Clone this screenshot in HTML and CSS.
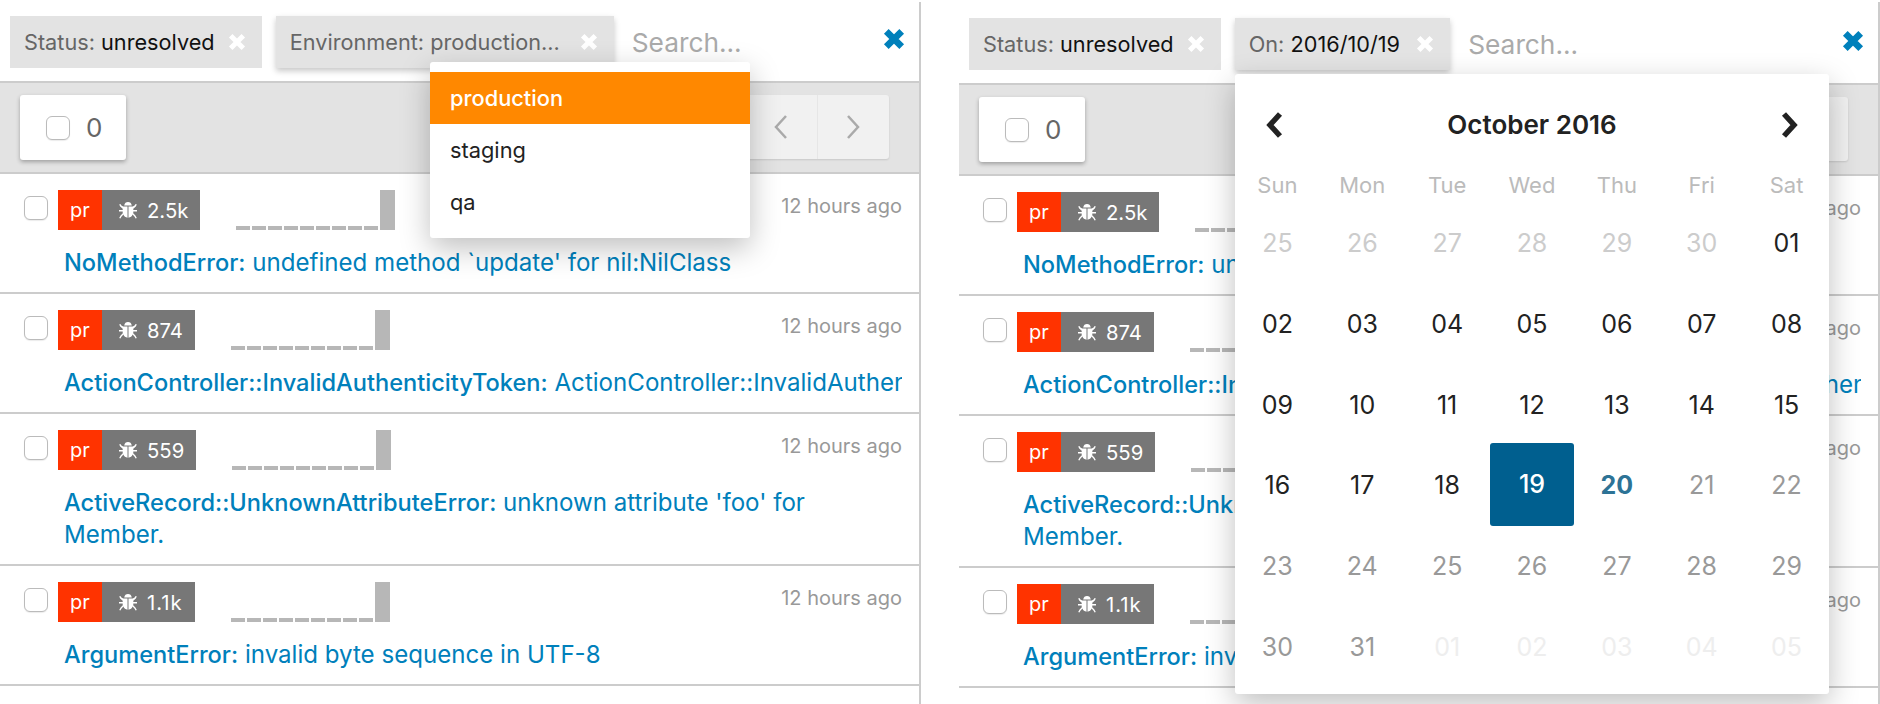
FILE: index.html
```html
<!DOCTYPE html>
<html lang="en">
<head>
  <meta charset="UTF-8" />
  <title>Issues</title>
  <link rel="stylesheet" href="styles.css">
</head>
<body>
  <svg class="defs" width="0" height="0">
    <symbol id="bug" viewBox="0 0 20 20"><path d="M6.2 5.4 C6.6 3.2 8 2 10 2 C12 2 13.4 3.2 13.8 5.4 Z M5.2 6.4 H9.5 V17.8 C7.6 17.6 6 16.4 5.4 14.6 L3.4 16.8 L2.4 18.6 L1.2 18 L2.6 15.6 L4.8 13.2 C4.7 12.6 4.7 12 4.7 11.4 H1 V10 H4.7 V8.8 L2.2 6.4 L1.2 4.6 L2.4 4 L3.4 5.6 Z M14.8 6.4 L16.6 5.6 L17.6 4 L18.8 4.6 L17.8 6.4 L15.3 8.8 V10 H19 V11.4 H15.3 C15.3 12 15.3 12.6 15.2 13.2 L17.4 15.6 L18.8 18 L17.6 18.6 L16.6 16.8 L14.6 14.6 C14 16.4 12.4 17.6 10.5 17.8 V6.4 Z"/></symbol>
    <symbol id="times" viewBox="0 0 20 20"><path d="M3 3 L17 17 M17 3 L3 17"/></symbol>
    <symbol id="chev-left" viewBox="0 0 20 28"><path d="M15 3 L5 14 L15 25"/></symbol>
    <symbol id="chev-right" viewBox="0 0 20 28"><path d="M5 3 L15 14 L5 25"/></symbol>
  </svg>

  <div class="panel panel-first">
    <div class="search-bar">
      <span class="tag"><span class="tag-key">Status:</span> unresolved <svg class="tag-x"><use href="#times"/></svg></span>
      <span class="tag tag-active"><span class="tag-key tag-env">Environment: production...</span> <svg class="tag-x"><use href="#times"/></svg></span>
      <span class="search-text">Search...</span>
      <svg class="clear-x"><use href="#times"/></svg>
    </div>
    <div class="toolbar">
      <div class="select-all"><input type="checkbox" class="check"><span>0</span></div>
      <div class="pager">
        <span class="pager-btn"><svg><use href="#chev-left"/></svg></span>
        <span class="pager-btn"><svg><use href="#chev-right"/></svg></span>
      </div>
    </div>

    <div class="row">
      <div class="row-top">
        <input type="checkbox" class="check">
        <span class="badge-env">pr</span>
        <span class="badge-count"><svg class="bug"><use href="#bug"/></svg>2.5k</span>
        <span class="spark"><i></i><i></i><i></i><i></i><i></i><i></i><i></i><i></i><i></i><i class="peak"></i></span>
        <span class="time">12 hours ago</span>
      </div>
      <div class="title"><b>NoMethodError:</b> undefined method `update' for nil:NilClass</div>
    </div>
    <div class="row">
      <div class="row-top">
        <input type="checkbox" class="check">
        <span class="badge-env">pr</span>
        <span class="badge-count"><svg class="bug"><use href="#bug"/></svg>874</span>
        <span class="spark"><i></i><i></i><i></i><i></i><i></i><i></i><i></i><i></i><i></i><i class="peak"></i></span>
        <span class="time">12 hours ago</span>
      </div>
      <div class="title title-clip"><b>ActionController::InvalidAuthenticityToken:</b> ActionController::InvalidAuthenticityToken</div>
    </div>
    <div class="row">
      <div class="row-top">
        <input type="checkbox" class="check">
        <span class="badge-env">pr</span>
        <span class="badge-count"><svg class="bug"><use href="#bug"/></svg>559</span>
        <span class="spark"><i></i><i></i><i></i><i></i><i></i><i></i><i></i><i></i><i></i><i class="peak"></i></span>
        <span class="time">12 hours ago</span>
      </div>
      <div class="title"><b>ActiveRecord::UnknownAttributeError:</b> unknown attribute 'foo' for Member.</div>
    </div>
    <div class="row">
      <div class="row-top">
        <input type="checkbox" class="check">
        <span class="badge-env">pr</span>
        <span class="badge-count badge-count-ones"><svg class="bug"><use href="#bug"/></svg>1.1k</span>
        <span class="spark"><i></i><i></i><i></i><i></i><i></i><i></i><i></i><i></i><i></i><i class="peak"></i></span>
        <span class="time">12 hours ago</span>
      </div>
      <div class="title"><b>ArgumentError:</b> invalid byte sequence in UTF-8</div>
    </div>

    <div class="dropdown">
      <div class="dropdown-item selected">production</div>
      <div class="dropdown-item">staging</div>
      <div class="dropdown-item">qa</div>
    </div>
  </div>

  <div class="panel panel-second">
    <div class="search-bar">
      <span class="tag"><span class="tag-key">Status:</span> unresolved <svg class="tag-x"><use href="#times"/></svg></span>
      <span class="tag tag-active"><span class="tag-key">On:</span> 2016/10/19 <svg class="tag-x"><use href="#times"/></svg></span>
      <span class="search-text">Search...</span>
      <svg class="clear-x"><use href="#times"/></svg>
    </div>
    <div class="toolbar">
      <div class="select-all"><input type="checkbox" class="check"><span>0</span></div>
      <div class="pager">
        <span class="pager-btn"><svg><use href="#chev-left"/></svg></span>
        <span class="pager-btn"><svg><use href="#chev-right"/></svg></span>
      </div>
    </div>

    <div class="row">
      <div class="row-top">
        <input type="checkbox" class="check">
        <span class="badge-env">pr</span>
        <span class="badge-count"><svg class="bug"><use href="#bug"/></svg>2.5k</span>
        <span class="spark"><i></i><i></i><i></i><i></i><i></i><i></i><i></i><i></i><i></i><i class="peak"></i></span>
        <span class="time">12 hours ago</span>
      </div>
      <div class="title"><b>NoMethodError:</b> undefined method `update' for nil:NilClass</div>
    </div>
    <div class="row">
      <div class="row-top">
        <input type="checkbox" class="check">
        <span class="badge-env">pr</span>
        <span class="badge-count"><svg class="bug"><use href="#bug"/></svg>874</span>
        <span class="spark"><i></i><i></i><i></i><i></i><i></i><i></i><i></i><i></i><i></i><i class="peak"></i></span>
        <span class="time">12 hours ago</span>
      </div>
      <div class="title title-clip"><b>ActionController::InvalidAuthenticityToken:</b> ActionController::InvalidAuthenticityToken</div>
    </div>
    <div class="row">
      <div class="row-top">
        <input type="checkbox" class="check">
        <span class="badge-env">pr</span>
        <span class="badge-count"><svg class="bug"><use href="#bug"/></svg>559</span>
        <span class="spark"><i></i><i></i><i></i><i></i><i></i><i></i><i></i><i></i><i></i><i class="peak"></i></span>
        <span class="time">12 hours ago</span>
      </div>
      <div class="title"><b>ActiveRecord::UnknownAttributeError:</b> unknown attribute 'foo' for Member.</div>
    </div>
    <div class="row">
      <div class="row-top">
        <input type="checkbox" class="check">
        <span class="badge-env">pr</span>
        <span class="badge-count badge-count-ones"><svg class="bug"><use href="#bug"/></svg>1.1k</span>
        <span class="spark"><i></i><i></i><i></i><i></i><i></i><i></i><i></i><i></i><i></i><i class="peak"></i></span>
        <span class="time">12 hours ago</span>
      </div>
      <div class="title"><b>ArgumentError:</b> invalid byte sequence in UTF-8</div>
    </div>

    <div class="calendar">
      <div class="cal-head">
        <svg class="cal-nav"><use href="#chev-left"/></svg>
        <span class="cal-month">October 2016</span>
        <svg class="cal-nav"><use href="#chev-right"/></svg>
      </div>
      <div class="cal-weekdays">
        <span>Sun</span><span>Mon</span><span>Tue</span><span>Wed</span><span>Thu</span><span>Fri</span><span>Sat</span>
      </div>
      <div class="cal-grid">
        <span class="day-prev">25</span><span class="day-prev">26</span><span class="day-prev">27</span><span class="day-prev">28</span><span class="day-prev">29</span><span class="day-prev">30</span><span>01</span>
        <span>02</span><span>03</span><span>04</span><span>05</span><span>06</span><span>07</span><span>08</span>
        <span>09</span><span>10</span><span>11</span><span>12</span><span>13</span><span>14</span><span>15</span>
        <span>16</span><span>17</span><span>18</span><span class="day-selected">19</span><span class="day-today">20</span><span class="day-future">21</span><span class="day-future">22</span>
        <span class="day-future">23</span><span class="day-future">24</span><span class="day-future">25</span><span class="day-future">26</span><span class="day-future">27</span><span class="day-future">28</span><span class="day-future">29</span>
        <span class="day-future">30</span><span class="day-future">31</span><span class="day-next">01</span><span class="day-next">02</span><span class="day-next">03</span><span class="day-next">04</span><span class="day-next">05</span>
      </div>
    </div>
  </div>
</body>
</html>
```

FILE: styles.css
```css
* {
  box-sizing: border-box;
}

body {
  margin: 0;
  height: 704px;
  overflow: hidden;
  display: flex;
  gap: 38px;
  background: #fff;
  font-family: Inter, "Noto Sans", sans-serif;
  color: #222;
}

.defs {
  position: absolute;
}

symbol path {
  fill: none;
  stroke: currentColor;
}

#bug path {
  fill: currentColor;
  stroke: none;
}

.panel {
  position: relative;
  width: 921px;
  height: 702px;
  margin-top: 2px;
  border-right: 2px solid #ccc;
}

/* search bar */
.search-bar {
  height: 83px;
  padding: 16px 14px 0 10px;
  display: flex;
  align-items: flex-start;
  gap: 14px;
  border-bottom: 2px solid #ccc;
}

.panel-first .search-bar {
  height: 81px;
  padding-top: 14px;
}

.tag {
  height: 52px;
  padding: 0 16px 0 14px;
  display: flex;
  align-items: center;
  white-space: pre;
  background: #e3e3e3;
  color: #111;
  font-size: 21.7px;
}

.tag-active {
  box-shadow: 0 3px 6px rgba(0, 0, 0, 0.22);
}

.tag-key {
  color: #666;
}

.tag-env {
  padding-right: 10px;
}

.tag-x {
  width: 18px;
  height: 18px;
  margin-left: 7px;
  color: #fff;
  stroke-width: 5.5px;
}

.tag-active .tag-x {
  margin-left: 10px;
}

.search-text {
  margin: 1px 0 0 4px;
  line-height: 52px;
  font-size: 26.3px;
  color: #aaa;
}

.clear-x {
  width: 22px;
  height: 22px;
  margin: 12px 0 0 auto;
  color: #0080bb;
  stroke-width: 6px;
}

/* toolbar */
.toolbar {
  height: 91px;
  padding: 12px 30px 0 20px;
  display: flex;
  justify-content: space-between;
  align-items: flex-start;
  background: #e3e3e3;
  border-bottom: 2px solid #ccc;
}

.select-all {
  width: 106px;
  height: 65px;
  padding-left: 26px;
  display: flex;
  align-items: center;
  gap: 16px;
  background: #fff;
  border-radius: 3px;
  box-shadow: 0 2px 4px rgba(0, 0, 0, 0.3);
  font-size: 26px;
  color: #666;
}

.check {
  appearance: none;
  flex: none;
  width: 24px;
  height: 24px;
  margin: 0;
  background: #fff;
  border: 1px solid #bbb;
  border-radius: 6px;
  box-shadow: 0 1px 1px rgba(0, 0, 0, 0.08);
}

.pager {
  display: flex;
  background: #f1f1f1;
  border-radius: 3px;
  box-shadow: 0 1px 2px rgba(0, 0, 0, 0.12);
}

.pager-btn {
  width: 72px;
  height: 64px;
  display: flex;
  align-items: center;
  justify-content: center;
  color: #aaa;
  stroke-width: 2.5px;
}

.pager-btn + .pager-btn {
  padding-right: 2px;
  border-left: 1px solid #e6e6e6;
}

.pager-btn svg {
  width: 20px;
  height: 28px;
}

/* issue rows */
.row {
  padding: 16px 17px 13px 24px;
  border-bottom: 2px solid #ccc;
}

.row-top {
  display: flex;
  align-items: flex-start;
  height: 40px;
}

.row-top .check {
  margin: 6px 10px 0 0;
}

.badge-env {
  width: 44px;
  height: 40px;
  line-height: 40px;
  text-align: center;
  background: #ff3300;
  color: #fff;
  font-size: 20px;
}

.badge-count {
  height: 40px;
  padding: 0 12px 0 16px;
  display: flex;
  align-items: center;
  gap: 9px;
  background: #777;
  color: #fff;
  font-size: 20.3px;
}

.badge-count-ones {
  letter-spacing: 1px;
}

.bug {
  width: 20px;
  height: 20px;
}

.spark {
  height: 40px;
  margin-left: 36px;
  display: flex;
  align-items: flex-end;
  gap: 2px;
}

.spark i {
  width: 14px;
  height: 4px;
  background: #b7b7b7;
}

.spark .peak {
  width: 15px;
  height: 40px;
}

.time {
  margin-left: auto;
  line-height: 32px;
  font-size: 20px;
  color: #999;
}

.title {
  margin: 17px 0 0 40px;
  line-height: 32px;
  font-size: 24.1px;
  color: #0080bb;
}

.title b {
  font-size: 23.6px;
  font-weight: 500;
}

.title-clip {
  white-space: nowrap;
  overflow: hidden;
}

/* environment menu */
.dropdown {
  position: absolute;
  left: 430px;
  top: 60px;
  width: 320px;
  padding: 10px 0;
  background: #fff;
  border-radius: 3px;
  box-shadow: 0 10px 30px rgba(0, 0, 0, 0.25);
}

.dropdown-item {
  height: 52px;
  padding-left: 20px;
  line-height: 52px;
  font-size: 21.8px;
}

.dropdown-item.selected {
  background: #ff8800;
  color: #fff;
  font-weight: 500;
}

/* date picker */
.calendar {
  position: absolute;
  left: 276px;
  top: 72px;
  width: 594px;
  height: 620px;
  background: #fff;
  border-radius: 3px;
  box-shadow: 0 10px 30px rgba(0, 0, 0, 0.25);
}

.cal-head {
  height: 93px;
  padding: 8px 30px 0 30px;
  display: flex;
  align-items: center;
  justify-content: space-between;
}

.cal-month {
  font-size: 26px;
  font-weight: 600;
}

.cal-nav {
  width: 20px;
  height: 28px;
  stroke-width: 5.5px;
}

.cal-weekdays,
.cal-grid {
  display: grid;
  grid-template-columns: repeat(7, 1fr);
  text-align: center;
}

.cal-weekdays {
  height: 36px;
  line-height: 36px;
  font-size: 22px;
  color: #bbb;
}

.cal-grid {
  grid-auto-rows: 80.7px;
  font-size: 25px;
}

.cal-grid span {
  display: flex;
  align-items: center;
  justify-content: center;
}

.day-prev {
  color: #ccc;
}

.day-future {
  color: #999;
}

.day-next {
  color: #eee;
}

.day-today {
  color: #2d7396;
  font-weight: 700;
}

.cal-grid .day-selected {
  margin-top: -2px;
  background: #005f8f;
  color: #fff;
  border-radius: 3px;
  font-weight: 500;
}
```
